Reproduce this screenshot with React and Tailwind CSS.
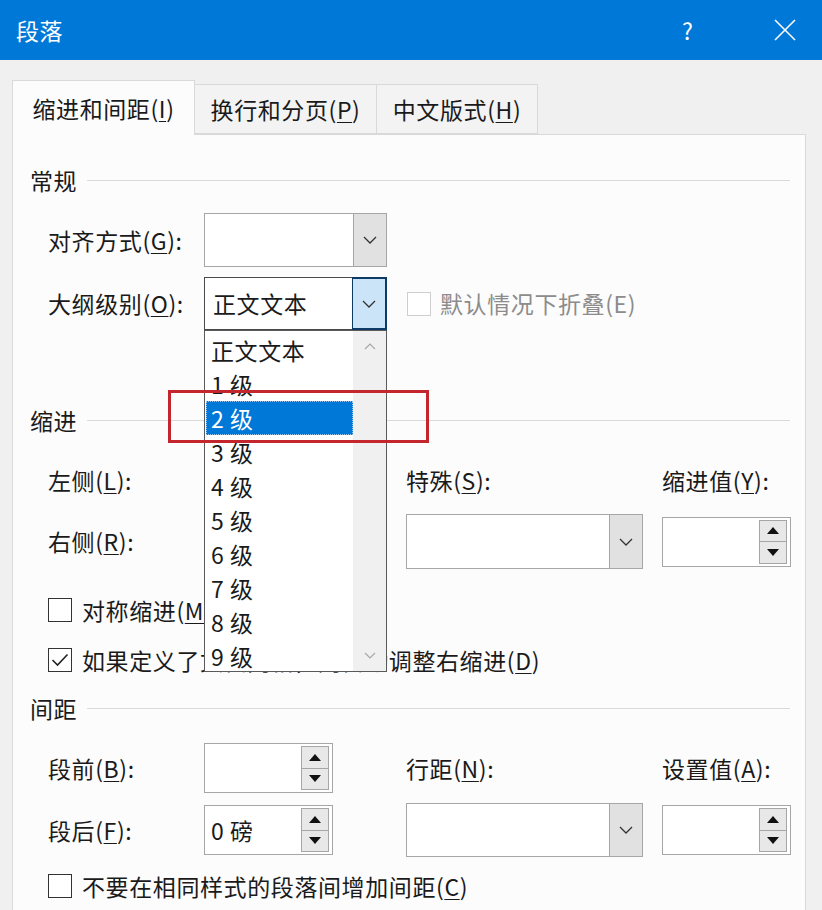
import React from "react";

const FONT = { fontFamily: '"Noto Sans CJK SC", "Microsoft YaHei", sans-serif' };

function Chevron({ color = "#333" }) {
  return (
    <svg width="14" height="8" viewBox="0 0 14 8" fill="none">
      <polyline points="1,1 7,7 13,1" stroke={color} strokeWidth="1.3" />
    </svg>
  );
}

function Select({ w, h, value, focused }) {
  return (
    <div
      className={`flex bg-white border ${focused ? "border-[#4a4a4a]" : "border-[#a6a6a6]"}`}
      style={{ width: w, height: h }}
    >
      <div className="flex-1 flex items-center pl-[8px] text-[23px] text-[#1a1a1a] leading-none">{value}</div>
      <div
        className={`w-[33px] flex items-center justify-center border-l ${
          focused ? "bg-[#cce4f7] border-[#0d3b66] border-2 -m-px w-[35px]" : "bg-[#e1e1e1] border-[#a6a6a6]"
        }`}
      >
        <Chevron />
      </div>
    </div>
  );
}

function Tri({ up }) {
  return (
    <svg width="12" height="7" viewBox="0 0 12 7">
      {up ? <polygon points="6,0 12,7 0,7" fill="#111" /> : <polygon points="0,0 12,0 6,7" fill="#111" />}
    </svg>
  );
}

function Spinner({ value }) {
  return (
    <div className="w-[129px] h-[50px] bg-white border border-[#a6a6a6] flex items-stretch">
      <div className="flex-1 flex items-center pl-[6px] text-[23px] text-[#1a1a1a] leading-none">{value}</div>
      <div className="flex flex-col py-[2px] pr-[3px]">
        <div className="w-[28px] flex-1 bg-[#e8e8e8] border border-[#a6a6a6] flex items-center justify-center">
          <Tri up />
        </div>
        <div className="w-[28px] flex-1 bg-[#e8e8e8] border border-[#a6a6a6] border-t-0 flex items-center justify-center">
          <Tri />
        </div>
      </div>
    </div>
  );
}

function Checkbox({ checked, disabled }) {
  return (
    <div
      className={`w-[24px] h-[24px] bg-white border ${disabled ? "border-[#cfcfcf]" : "border-[#333]"} flex items-center justify-center`}
    >
      {checked && (
        <svg width="18" height="14" viewBox="0 0 18 14" fill="none">
          <polyline points="1.5,7 6.5,12 16.5,1.5" stroke="#222" strokeWidth="1.6" />
        </svg>
      )}
    </div>
  );
}

function Key({ children }) {
  return <span className="underline underline-offset-[3px] decoration-1">{children}</span>;
}

function Heading({ children, className }) {
  return (
    <div className={`flex items-center h-[30px] pl-[17px] pr-[15px] ${className}`}>
      <span className="text-[23px] leading-none text-[#1a1a1a]">{children}</span>
      <div className="flex-1 h-px bg-[#dadada] ml-[10px]" />
    </div>
  );
}

const Label = ({ children, w }) => (
  <div className="text-[23px] leading-none text-[#1a1a1a] whitespace-nowrap" style={{ width: w }}>
    {children}
  </div>
);

export default function App() {
  const items = ["正文文本", "1 级", "2 级", "3 级", "4 级", "5 级", "6 级", "7 级", "8 级", "9 级"];
  return (
    <div className="relative w-[822px] h-[910px] overflow-hidden bg-[#f0f0f0] tracking-[0.6px]" style={FONT}>
      {/* Title bar */}
      <div className="h-[60px] bg-[#0078d7] flex items-center text-white">
        <div className="pl-[16px] text-[23px] leading-none flex-1">段落</div>
        <div className="text-[23px] leading-none w-[20px] mr-[72px]">?</div>
        <div className="mr-[26px]">
          <svg width="22" height="22" viewBox="0 0 22 22" fill="none">
            <line x1="1" y1="1" x2="21" y2="21" stroke="white" strokeWidth="1.6" />
            <line x1="21" y1="1" x2="1" y2="21" stroke="white" strokeWidth="1.6" />
          </svg>
        </div>
      </div>

      {/* Tabs */}
      <div className="flex items-end pl-[12px] mt-[20px] h-[55px] relative z-10">
        <div className="w-[183px] h-[55px] bg-[#fcfcfc] border border-b-0 border-[#d9d9d9] flex items-center justify-center text-[23px] leading-none text-[#1a1a1a]">
          缩进和间距(<Key>I</Key>)
        </div>
        <div className="w-[182px] h-[50px] mb-px bg-[#f3f3f3] border border-l-0 border-[#d9d9d9] flex items-center justify-center text-[23px] leading-none text-[#1a1a1a]">
          换行和分页(<Key>P</Key>)
        </div>
        <div className="w-[161px] h-[50px] mb-px bg-[#f3f3f3] border border-l-0 border-[#d9d9d9] flex items-center justify-center text-[23px] leading-none text-[#1a1a1a]">
          中文版式(<Key>H</Key>)
        </div>
      </div>

      {/* Panel */}
      <div className="-mt-px ml-[12px] w-[794px] h-[800px] bg-[#fcfcfc] border border-[#d9d9d9]">
        <Heading className="mt-[30px]">常规</Heading>

        <div className="flex items-center h-[54px] mt-[18px] pl-[35px]">
          <Label w={156}>
            对齐方式(<Key>G</Key>):
          </Label>
          <Select w={183} h={54} value="" />
        </div>

        <div className="flex items-center h-[53px] mt-[10px] pl-[35px]">
          <Label w={156}>
            大纲级别(<Key>O</Key>):
          </Label>
          <Select w={183} h={53} value="正文文本" focused />
          <div className="ml-[20px] flex items-center gap-[9px]">
            <Checkbox disabled />
            <span className="text-[23px] leading-none text-[#8c8c8c]">默认情况下折叠(E)</span>
          </div>
        </div>

        <Heading className="mt-[75px]">缩进</Heading>

        <div className="flex items-center h-[50px] mt-[20px] pl-[35px]">
          <Label w={156}>
            左侧(<Key>L</Key>):
          </Label>
          <div className="w-[202px]">
            <Spinner value="" />
          </div>
          <Label w={256}>
            特殊(<Key>S</Key>):
          </Label>
          <Label>
            缩进值(<Key>Y</Key>):
          </Label>
        </div>

        <div className="flex items-center h-[55px] mt-[9px] pl-[35px]">
          <Label w={156}>
            右侧(<Key>R</Key>):
          </Label>
          <div className="w-[202px]">
            <Spinner value="" />
          </div>
          <div className="w-[256px]">
            <Select w={237} h={55} value="" />
          </div>
          <Spinner value="" />
        </div>

        <div className="flex items-center h-[30px] mt-[26px] pl-[35px] gap-[10px]">
          <Checkbox />
          <span className="text-[23px] leading-none text-[#1a1a1a]">
            对称缩进(<Key>M</Key>)
          </span>
        </div>

        <div className="flex items-center h-[30px] mt-[20px] pl-[35px] gap-[10px]">
          <Checkbox checked />
          <span className="text-[23px] leading-none text-[#1a1a1a] whitespace-nowrap">
            如果定义了文档网格，则自动调整右缩进(<Key>D</Key>)
          </span>
        </div>

        <Heading className="mt-[18px]">间距</Heading>

        <div className="flex items-center h-[50px] mt-[20px] pl-[35px]">
          <Label w={156}>
            段前(<Key>B</Key>):
          </Label>
          <div className="w-[202px]">
            <Spinner value="" />
          </div>
          <Label w={256}>
            行距(<Key>N</Key>):
          </Label>
          <Label>
            设置值(<Key>A</Key>):
          </Label>
        </div>

        <div className="flex items-center h-[54px] mt-[10px] pl-[35px]">
          <Label w={156}>
            段后(<Key>F</Key>):
          </Label>
          <div className="w-[202px]">
            <Spinner value="0 磅" />
          </div>
          <div className="w-[256px]">
            <Select w={237} h={54} value="" />
          </div>
          <Spinner value="" />
        </div>

        <div className="flex items-center h-[30px] mt-[14px] pl-[35px] gap-[10px]">
          <Checkbox />
          <span className="text-[23px] leading-none text-[#1a1a1a] whitespace-nowrap">
            不要在相同样式的段落间增加间距(<Key>C</Key>)
          </span>
        </div>
      </div>

      {/* Open dropdown list (overlay) */}
      <div className="absolute left-[204px] top-[330px] w-[183px] h-[342px] bg-white border border-[#5a5a5a] flex">
        <div className="flex-1 pt-[2px] pl-[1px]">
          {items.map((it, i) => (
            <div
              key={it}
              className={`h-[34px] flex items-center pl-[5px] text-[23px] leading-none ${
                i === 2
                  ? "bg-[#0078d7] text-white outline-1 outline-dotted outline-[#9cc3e8] -outline-offset-1"
                  : "text-[#1a1a1a]"
              }`}
            >
              {it}
            </div>
          ))}
        </div>
        <div className="w-[33px] bg-[#f0f0f0] flex flex-col items-center justify-between py-[12px]">
          <svg width="12" height="7" viewBox="0 0 12 7" fill="none">
            <polyline points="1,6 6,1 11,6" stroke="#a8a8a8" strokeWidth="1.2" />
          </svg>
          <svg width="12" height="7" viewBox="0 0 12 7" fill="none">
            <polyline points="1,1 6,6 11,1" stroke="#a8a8a8" strokeWidth="1.2" />
          </svg>
        </div>
      </div>

      {/* Red highlight annotation */}
      <div className="absolute left-[168px] top-[390px] w-[261px] h-[53px] border-[3px] border-[#c4262e]" />
    </div>
  );
}
